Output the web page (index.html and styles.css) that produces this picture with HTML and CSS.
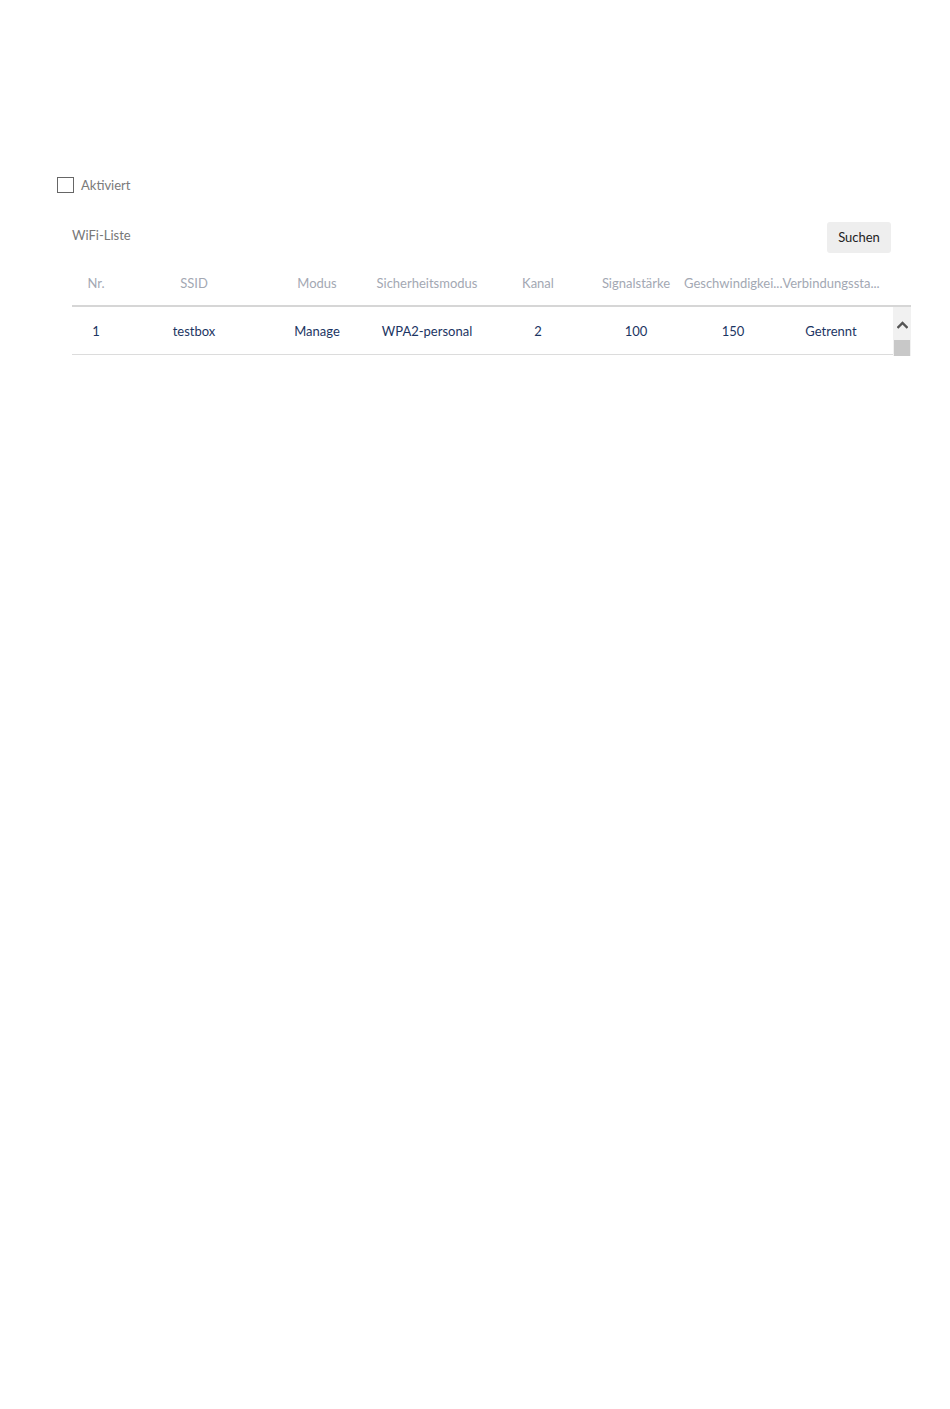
FILE: index.html
```html
<!DOCTYPE html>
<html lang="de">
<head>
<meta charset="utf-8">
<title>WiFi</title>
<link rel="stylesheet" href="styles.css">
</head>
<body>
<div class="page">
  <label class="check">
    <span class="box"></span>
    <span class="check-label">Aktiviert</span>
  </label>
  <div class="section">
    <div class="section-head">
      <span class="section-title">WiFi-Liste</span>
      <button class="btn">Suchen</button>
    </div>
    <div class="table">
      <div class="thead">
        <div class="row">
          <div class="cell">Nr.</div>
          <div class="cell">SSID</div>
          <div class="cell">Modus</div>
          <div class="cell">Sicherheitsmodus</div>
          <div class="cell">Kanal</div>
          <div class="cell">Signalstärke</div>
          <div class="cell" title="Geschwindigkeit">Geschwindigkei...</div>
          <div class="cell" title="Verbindungsstatus">Verbindungssta...</div>
        </div>
      </div>
      <div class="tbody-wrap">
        <div class="tbody">
          <div class="row body-row">
            <div class="cell">1</div>
            <div class="cell">testbox</div>
            <div class="cell">Manage</div>
            <div class="cell">WPA2-personal</div>
            <div class="cell">2</div>
            <div class="cell">100</div>
            <div class="cell">150</div>
            <div class="cell">Getrennt</div>
          </div>
        </div>
        <div class="scrollbar">
          <div class="sb-up">
            <svg width="11" height="8" viewBox="0 0 11 8"><path d="M0.5 7 L5.5 2 L10.5 7" fill="none" stroke="#555" stroke-width="2.4"/></svg>
          </div>
          <div class="sb-thumb"></div>
        </div>
      </div>
    </div>
  </div>
</div>
</body>
</html>
```
FILE: styles.css
```css
* { box-sizing: border-box; }
html, body { margin: 0; padding: 0; background: #fff; }
body {
  font-family: Lato, "Open Sans", sans-serif;
  font-size: 13px;
  color: #333;
}
.page {
  padding: 176px 39px 0 57px;
}
.check {
  display: flex;
  align-items: center;
  gap: 7px;
  height: 17px;
}
.box {
  width: 17px;
  height: 16px;
  border: 1px solid #666;
  background: #fff;
}
.check-label {
  color: #7a7a7a;
  font-size: 13px;
}
.section {
  padding-left: 15px;
  margin-top: 27px;
}
.section-head {
  display: flex;
  justify-content: space-between;
  align-items: center;
  height: 32px;
  padding-right: 20px;
}
.section-title {
  color: #777;
  font-size: 13px;
  margin-top: -2px;
}
.btn {
  font-family: inherit;
  font-size: 13px;
  color: #222;
  background: #eeeeee;
  border: none;
  border-radius: 3px;
  width: 64px;
  height: 31px;
  padding: 0;
  margin-top: 2px;
}
.table {
  margin-top: 23px;
}
.row {
  display: grid;
  grid-template-columns: 48px 148px 98px 122px 100px 96px 98px 98px 1fr;
  align-items: center;
}
.cell {
  text-align: center;
  white-space: nowrap;
}
.thead .row {
  height: 32px;
  color: #a3a8b3;
  border-bottom: 2px solid #d6d6d6;
  padding-bottom: 14px;
}
.tbody-wrap {
  display: flex;
}
.tbody {
  flex: 1;
}
.body-row {
  height: 48px;
  color: #1c3563;
  border-bottom: 1px solid #dcdcdc;
}
.scrollbar {
  width: 18px;
  background: #f1f1f1;
  display: flex;
  flex-direction: column;
  height: 49px;
}
.sb-up {
  height: 33px;
  display: flex;
  align-items: center;
  justify-content: center;
  padding-top: 2px;
}
.sb-thumb {
  margin: 0 1px 0 1px;
  height: 16px;
  background: #c8c8c8;
}
```
